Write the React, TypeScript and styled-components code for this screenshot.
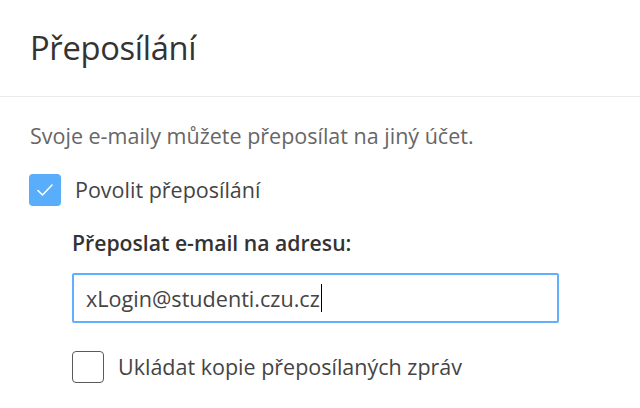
import React from "react";
import styled, { createGlobalStyle } from "styled-components";

const Global = createGlobalStyle`
  html, body { margin: 0; padding: 0; background: #ffffff; }
  body { font-family: "Open Sans", "Noto Sans", sans-serif; color: #333; }
`;

const Page = styled.div`
  width: 640px;
  height: 408px;
  overflow: hidden;
  background: #fff;
`;

const Header = styled.header`
  height: 97px;
  box-sizing: border-box;
  padding: 0 30px 2px 30px;
  display: flex;
  align-items: center;
  border-bottom: 1px solid #ebebeb;
`;

const Title = styled.h1`
  margin: 0;
  font-size: 32.7px;
  font-weight: 400;
  color: #333;
  letter-spacing: -0.3px;
`;

const Body = styled.div`
  padding: 25px 30px 0 29px;
  display: flex;
  flex-direction: column;
`;

const Description = styled.p`
  margin: 0 0 0 1px;
  font-size: 21.5px;
  color: #666;
  line-height: 28px;
`;

const CheckRow = styled.label<{ $mt: number }>`
  display: flex;
  align-items: center;
  gap: 14px;
  margin-top: ${(p) => p.$mt}px;
`;

const Box = styled.span<{ $checked?: boolean }>`
  flex: none;
  width: 32px;
  height: 32px;
  box-sizing: border-box;
  border-radius: 4px;
  display: flex;
  align-items: center;
  justify-content: center;
  background: ${(p) => (p.$checked ? "#59aefc" : "#fff")};
  border: ${(p) => (p.$checked ? "none" : "1px solid #5a5a5a")};
`;

const CheckLabel = styled.span`
  font-size: 21.5px;
  line-height: 28px;
  color: #444;
`;

const Nested = styled.div`
  margin-left: 43px;
  margin-top: 23px;
  display: flex;
  flex-direction: column;
`;

const FieldLabel = styled.div`
  font-size: 21.2px;
  font-weight: 600;
  color: #333;
  line-height: 28px;
`;

const InputBox = styled.div`
  margin-top: 16px;
  width: 487px;
  height: 50px;
  box-sizing: border-box;
  border: 2px solid #62b0fd;
  border-radius: 2px;
  display: flex;
  align-items: center;
  padding-left: 12px;
  font-size: 21.6px;
  color: #444;
`;

const Caret = styled.span`
  display: inline-block;
  width: 1px;
  height: 28px;
  background: #000;
  margin-left: 1px;
`;

export default function App() {
  return (
    <Page>
      <Global />
      <Header>
        <Title>Přeposílání</Title>
      </Header>
      <Body>
        <Description>Svoje e-maily můžete přeposílat na jiný účet.</Description>
        <CheckRow $mt={24}>
          <Box $checked>
            <svg width="18" height="14" viewBox="0 0 18 14">
              <path d="M2 7.5 L6.5 12 L16 2" fill="none" stroke="#fff" strokeWidth="1.6" strokeLinecap="round" strokeLinejoin="round" />
            </svg>
          </Box>
          <CheckLabel>Povolit přeposílání</CheckLabel>
        </CheckRow>
        <Nested>
          <FieldLabel>Přeposlat e-mail na adresu:</FieldLabel>
          <InputBox>
            xLogin@studenti.czu.cz
            <Caret />
          </InputBox>
          <CheckRow $mt={28}>
            <Box />
            <CheckLabel>Ukládat kopie přeposílaných zpráv</CheckLabel>
          </CheckRow>
        </Nested>
      </Body>
    </Page>
  );
}
